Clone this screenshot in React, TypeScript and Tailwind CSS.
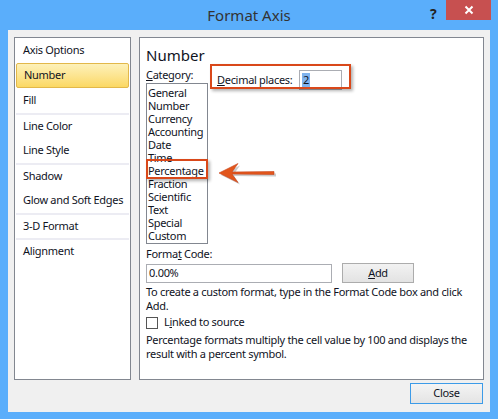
import React from "react";

const font = { fontFamily: '"Noto Sans", "Open Sans", sans-serif' };

const sections: { label: string; sep?: boolean; active?: boolean }[] = [
  { label: "Axis Options" },
  { label: "Number", active: true },
  { label: "Fill" },
  { label: "Line Color", sep: true },
  { label: "Line Style" },
  { label: "Shadow", sep: true },
  { label: "Glow and Soft Edges" },
  { label: "3-D Format", sep: true },
  { label: "Alignment", sep: true },
];

const categories = [
  "General",
  "Number",
  "Currency",
  "Accounting",
  "Date",
  "Time",
  "Percentage",
  "Fraction",
  "Scientific",
  "Text",
  "Special",
  "Custom",
];

function Arrow() {
  return (
    <svg width="64" height="26" viewBox="0 0 64 26" className="absolute left-[77px] top-[124px]">
      <g transform="translate(2,2)" fill="#9a9a9a" opacity="0.5">
        <path d="M2 11 L21 1.5 L15 10 L57 9.5 L57 12.5 L15 12 L21 20.5 Z" />
      </g>
      <path d="M2 11 L21 1.5 L15 10 L57 9.5 L57 12.5 L15 12 L21 20.5 Z" fill="#e2561c" stroke="#c8431a" strokeWidth="0.6" />
    </svg>
  );
}

export default function App() {
  return (
    <div className="w-[498px] h-[419px] bg-[#5aaefb] flex flex-col text-[11px] tracking-[-0.3px] text-[#10131e]" style={font}>
      {/* title bar */}
      <div className="relative h-[30px] flex items-center justify-center tracking-normal">
        <span className="text-[15px] text-[#333] mt-[1px]">Format Axis</span>
        <span className="absolute left-[430px] top-[3px] text-[14px] font-bold text-[#222]">?</span>
        <div className="absolute left-[446px] top-0 w-[45px] h-[20px] bg-[#c75050] flex items-center justify-center">
          <svg width="10" height="10" viewBox="0 0 10 10">
            <path d="M1.5 1.5 L8.5 8.5 M8.5 1.5 L1.5 8.5" stroke="#fff" strokeWidth="2" />
          </svg>
        </div>
      </div>

      {/* body */}
      <div className="mx-[8px] h-[382px] bg-[#f0f0f0] flex flex-col pt-[7px] px-[6px]">
        <div className="flex gap-[8px]">
          {/* left nav */}
          <div className="w-[117px] h-[343px] bg-white border border-[#828790]">
            {sections.map((s) => (
              <div
                key={s.label}
                className={
                  "h-[25px] flex items-center mx-[1px] " +
                  (s.sep ? "border-t-2 border-[#ececf3] pl-[7px] " : "pl-[7px] ") +
                  (s.active
                    ? "bg-gradient-to-b from-[#fdf1b9] to-[#fbd862] border border-[#e2b84a] rounded-[2px] pl-[6px]"
                    : "")
                }
              >
                {s.label}
              </div>
            ))}
          </div>

          {/* right panel */}
          <div className="relative w-[345px] h-[343px] bg-white border border-[#828790] pl-[6px] pt-[7px]">
            <div className="text-[15px] leading-[20px] h-[20px] tracking-normal">Number</div>
            <div className="flex">
              <div className="flex flex-col">
                <div className="leading-[16px] mt-[2px]">
                  <span className="underline">C</span>ategory:
                </div>
                <div className="w-[62px] h-[161px] border border-[#828790] pt-[2px] pl-[1px] leading-[13px]">
                  {categories.map((c) => (
                    <div key={c} className="h-[13px] whitespace-nowrap">
                      {c}
                    </div>
                  ))}
                </div>
              </div>
              <div className="ml-[9px] mt-[5px] h-[20px] flex items-center">
                <span className="w-[82px] whitespace-nowrap">
                  <span className="underline">D</span>ecimal places:
                </span>
                <div className="w-[43px] h-[20px] border border-[#abadb3] bg-white flex items-center pl-[2px]">
                  <span className="bg-[#7fb3ee] leading-[14px] px-[1px]">2</span>
                </div>
              </div>
            </div>

            <div className="leading-[16px] mt-[2px]">
              Forma<span className="underline">t</span> Code:
            </div>
            <div className="flex items-start mt-[1px]">
              <div className="w-[186px] h-[19px] border border-[#abadb3] flex items-center pl-[2px] mt-[1px]">0.00%</div>
              <button className="ml-[10px] w-[72px] h-[20px] border border-[#acacac] bg-gradient-to-b from-[#f2f2f2] to-[#e3e3e3] flex items-center justify-center">
                <span className="underline">A</span>dd
              </button>
            </div>
            <div className="leading-[13.5px] mt-[2px] whitespace-nowrap">
              To create a custom format, type in the Format Code box and click
              <br />
              Add.
            </div>
            <label className="flex items-center mt-[4px] h-[13px]">
              <span className="w-[12px] h-[12px] border border-[#555] bg-white" />
              <span className="ml-[6px]">
                L<span className="underline">i</span>nked to source
              </span>
            </label>
            <div className="leading-[14px] mt-[4px] whitespace-nowrap">
              Percentage formats multiply the cell value by 100 and displays the
              <br />
              result with a percent symbol.
            </div>

            {/* annotations */}
            <div className="absolute left-[70px] top-[26px] w-[141px] h-[25px] border-2 border-[#d9481a] shadow-[2px_2px_3px_rgba(0,0,0,0.3)]" />
            <div className="absolute left-[6px] top-[121px] w-[62px] h-[20px] border-2 border-[#d9481a] shadow-[2px_2px_3px_rgba(0,0,0,0.3)]" />
            <Arrow />
          </div>
        </div>

        <div className="flex justify-end mt-[3px] pr-[1px]">
          <button className="w-[73px] h-[21px] border border-[#3c9be8] bg-gradient-to-b from-[#f4f4f4] to-[#e4e4e4] flex items-center justify-center">
            Close
          </button>
        </div>
      </div>
    </div>
  );
}
